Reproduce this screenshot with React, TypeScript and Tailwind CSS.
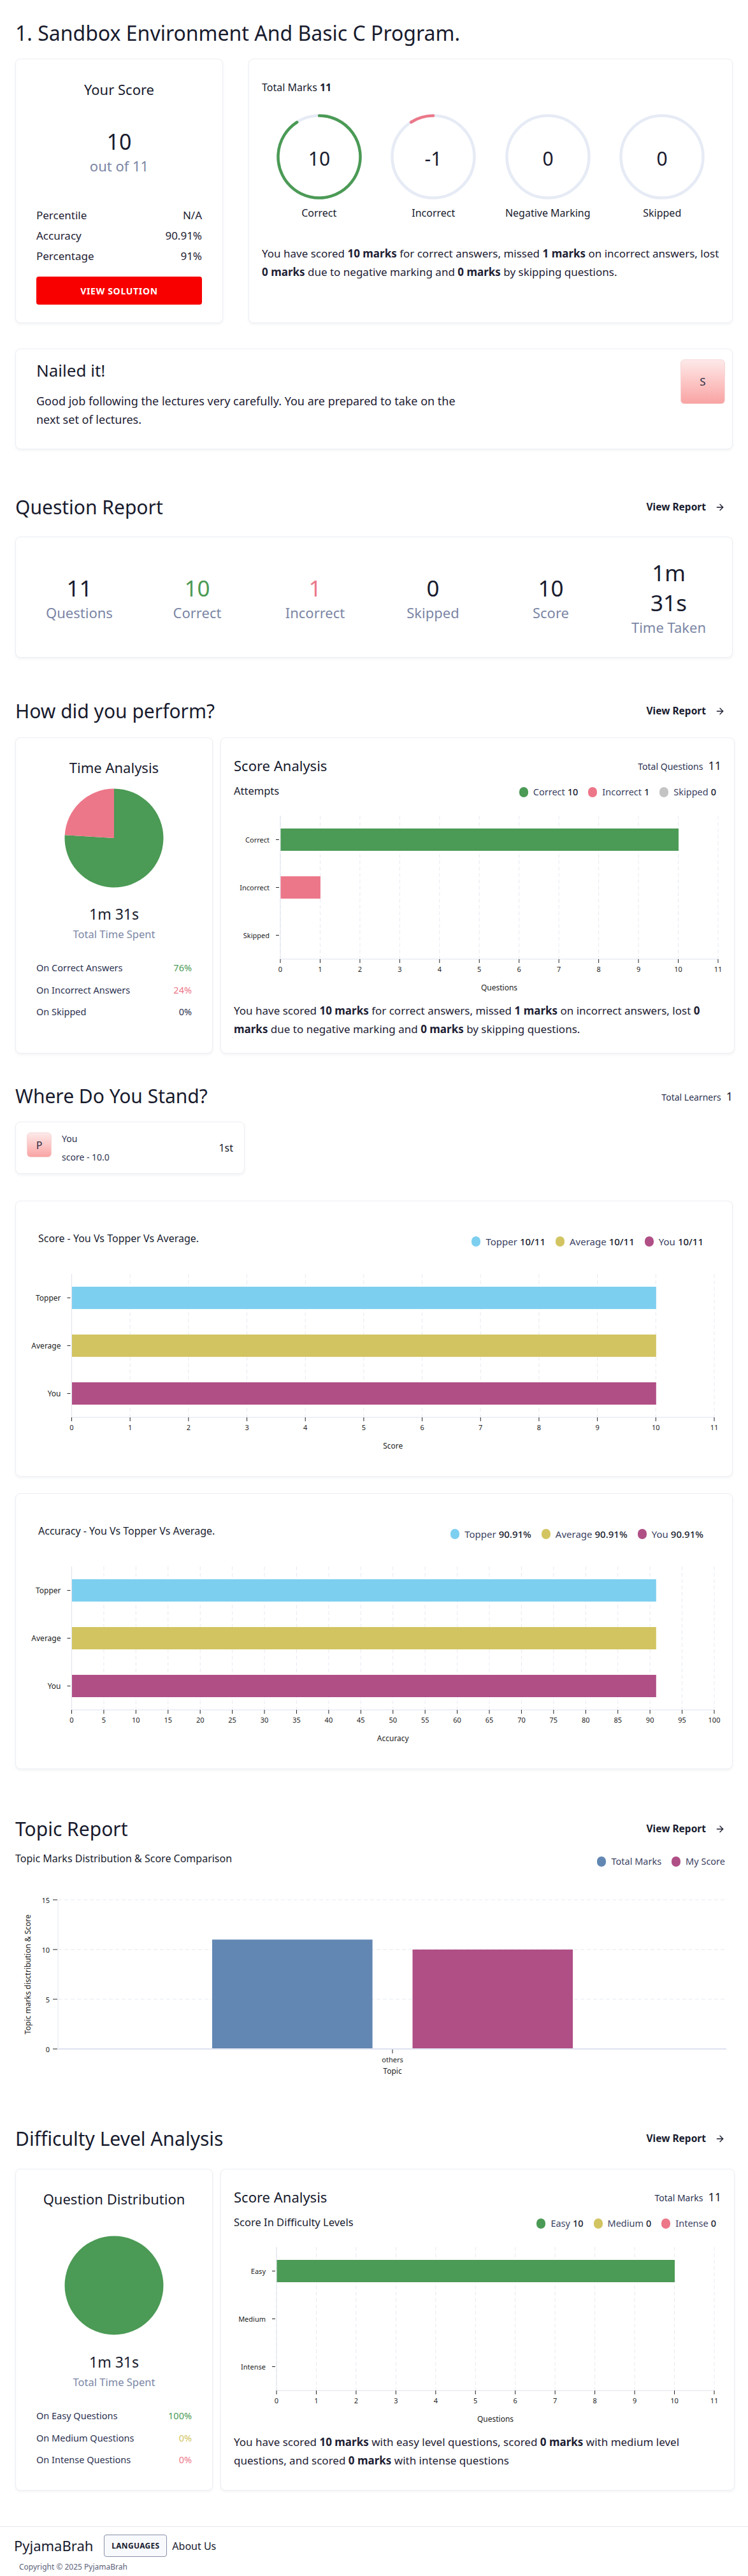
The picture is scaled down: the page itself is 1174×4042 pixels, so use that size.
import { ArrowRight } from 'lucide-react';

const GREEN = '#4b9a55';
const PINK = '#ec7789';
const BLUE = '#7dcff0';
const OLIVE = '#d2c461';
const MAGENTA = '#b04f86';
const STEEL = '#6287b3';

const polar = (cx: number, cy: number, r: number, deg: number) => {
    const a = (deg * Math.PI) / 180;
    return [cx + r * Math.sin(a), cy - r * Math.cos(a)];
};

const arcPath = (cx: number, cy: number, r: number, from: number, to: number) => {
    const [x1, y1] = polar(cx, cy, r, from);
    const [x2, y2] = polar(cx, cy, r, to - 0.01);
    const large = to - from > 180 ? 1 : 0;
    return `M ${x1} ${y1} A ${r} ${r} 0 ${large} 1 ${x2} ${y2}`;
};

const wedge = (cx: number, cy: number, r: number, from: number, to: number) => {
    const [x1, y1] = polar(cx, cy, r, from);
    const [x2, y2] = polar(cx, cy, r, to);
    const large = to - from > 180 ? 1 : 0;
    return `M ${cx} ${cy} L ${x1} ${y1} A ${r} ${r} 0 ${large} 1 ${x2} ${y2} Z`;
};

const ViewReport = () => (
    <a className="flex items-center gap-[14px] pr-3 text-[15.5px] font-bold text-[#181b2e] cursor-pointer">
        View Report
        <ArrowRight className="h-4 w-4" strokeWidth={2} />
    </a>
);

const SectionHeader = ({ title, right }: { title: string; right?: React.ReactNode }) => (
    <div className="flex h-10 items-center justify-between">
        <h2 className="text-[30px] leading-10 text-[#181b2e]">{title}</h2>
        {right ?? <ViewReport />}
    </div>
);

const Card = ({ className = '', children }: { className?: string; children: React.ReactNode }) => (
    <div className={`rounded-lg border border-[#eceef4] bg-white shadow-[0_2px_4px_rgba(40,50,90,0.06)] ${className}`}>{children}</div>
);

type LegendItem = { dot: string; label: string; value?: string };

const Legend = ({ items, size = 'text-[14.5px]' }: { items: LegendItem[]; size?: string }) => (
    <div className="flex items-center gap-4">
        {items.map((it) => (
            <div key={it.label} className={`flex items-center gap-2 ${size} text-[#3b4262]`}>
                <span className={`h-4 w-[14px] rounded-full ${it.dot}`} />
                <span>
                    {it.label}
                    {it.value && <span className="ml-1 font-medium text-[#181b2e]">{it.value}</span>}
                </span>
            </div>
        ))}
    </div>
);

const Ring = ({ value, label, arc }: { value: string; label: string; arc?: { from: number; to: number; color: string } }) => (
    <div className="flex flex-col items-center">
        <svg width={134} height={134} viewBox="0 0 134 134">
            <circle cx={67} cy={67} r={64.5} fill="none" stroke="#e6ebf5" strokeWidth={4.5} />
            {arc && <path d={arcPath(67, 67, 64.5, arc.from, arc.to)} fill="none" stroke={arc.color} strokeWidth={4.5} strokeLinecap="round" />}
            <text x={67} y={69} textAnchor="middle" dominantBaseline="central" fontSize={30} fill="#181b2e">{value}</text>
        </svg>
        <span className="mt-[9px] text-[16px] leading-6 text-[#181b2e]">{label}</span>
    </div>
);

type Row = { label: string; value: number; color: string };

const HBarChart = ({ width, left, plotW, max, ticks, rows, axisLabel, labelSize = 11 }: {
    width: number; left: number; plotW: number; max: number; ticks: number[]; rows: Row[]; axisLabel: string; labelSize?: number;
}) => {
    const top = 19;
    const plotH = 225;
    const bottom = top + plotH;
    const band = plotH / rows.length;
    const sx = (v: number) => left + (v / max) * plotW;
    return (
        <svg width={width} height={300} className="block">
            {ticks.map((t) => (
                <line key={`g${t}`} x1={sx(t)} x2={sx(t)} y1={top} y2={bottom} stroke="#e8eaf1" strokeDasharray="6 4" />
            ))}
            <line x1={left} x2={left} y1={top} y2={bottom} stroke="#dfe2ec" />
            <line x1={left} x2={left + plotW} y1={bottom} y2={bottom} stroke="#eef0f6" strokeWidth={2} />
            {rows.map((r, i) => {
                const cy = top + band * i + band / 2;
                return (
                    <g key={r.label}>
                        {r.value > 0 && <rect x={left + 0.5} y={cy - 17.5} width={(r.value / max) * plotW} height={35} fill={r.color} />}
                        <line x1={left - 7} x2={left - 2} y1={cy} y2={cy} stroke="#222" />
                        <text x={left - 17} y={cy} textAnchor="end" dominantBaseline="central" fontSize={labelSize} fill="#222">{r.label}</text>
                    </g>
                );
            })}
            {ticks.map((t) => (
                <g key={`t${t}`}>
                    <line x1={sx(t)} x2={sx(t)} y1={bottom} y2={bottom + 6} stroke="#222" />
                    <text x={sx(t)} y={bottom + 15} textAnchor="middle" dominantBaseline="central" fontSize={11} fill="#222">{t}</text>
                </g>
            ))}
            <text x={left + plotW / 2} y={bottom + 44} textAnchor="middle" dominantBaseline="central" fontSize={12} fill="#222">{axisLabel}</text>
        </svg>
    );
};

const range = (n: number, step = 1) => Array.from({ length: n }, (_, i) => i * step);

const Pie = ({ parts, mt }: { parts: { from: number; to: number; color: string }[]; mt: string }) => (
    <svg width={156} height={156} viewBox="0 0 156 156" className={`mx-auto block ${mt}`}>
        {parts.map((p) =>
            p.to - p.from >= 360 ? (
                <circle key={p.color} cx={78} cy={78} r={77.5} fill={p.color} />
            ) : (
                <path key={p.color} d={wedge(78, 78, 77.5, p.from, p.to)} fill={p.color} />
            )
        )}
    </svg>
);

const StatRows = ({ rows }: { rows: { label: string; value: string; color: string }[] }) => (
    <div className="flex flex-col gap-[12.5px]">
        {rows.map((r) => (
            <div key={r.label} className="flex justify-between text-[14.5px] leading-[22px]">
                <span className="text-[#2b3150]">{r.label}</span>
                <span className={r.color}>{r.value}</span>
            </div>
        ))}
    </div>
);

const ScoreAnalysisCard = ({ totalLabel, subtitle, legend, chart, children }: {
    totalLabel: string; subtitle: string; legend: LegendItem[]; chart: React.ReactNode; children: React.ReactNode;
}) => (
    <Card className="flex-1 px-5 pt-[28px] pb-[23px]">
        <div className="flex h-[30px] items-center justify-between">
            <h3 className="text-[22px] leading-[30px] text-[#181b2e]">Score Analysis</h3>
            <div className="flex items-baseline gap-2 text-[14px] text-[#2b3150]">
                {totalLabel}
                <span className="text-[18px] text-[#181b2e]">11</span>
            </div>
        </div>
        <div className="mt-[13px] flex h-6 items-center justify-between">
            <span className="text-[16.5px] text-[#181b2e]">{subtitle}</span>
            <div className="mt-1 pr-2">
                <Legend items={legend} />
            </div>
        </div>
        <div className="mt-2">{chart}</div>
        <p className="mt-[10px] text-[17px] leading-[29px] text-[#1d2033]">{children}</p>
    </Card>
);

const Badge = ({ letter, size }: { letter: string; size: string }) => (
    <div className={`flex items-center justify-center rounded-md border border-[#f6d6d6] bg-gradient-to-b from-[#fde9e9] to-[#f8a3a3] text-[#2b2f45] ${size}`}>
        {letter}
    </div>
);

const App = () => {
    const scoreTicks = range(12);
    const accTicks = range(21, 5);

    return (
        <div className="w-[1174px] bg-white font-['Noto_Sans',sans-serif] text-[#1d2033]">
            <div className="px-6">
                {/* Title */}
                <h1 className="pt-[30px] text-[32px] leading-[44px] text-[#181b2e]">1. Sandbox Environment And Basic C Program.</h1>

                {/* Score overview */}
                <div className="mt-[18px] flex gap-10">
                    <Card className="w-[326px] shrink-0 px-8 pt-[33px] pb-[28px]">
                        <div className="text-center text-[22px] leading-7 text-[#181b2e]">Your Score</div>
                        <div className="mt-11 text-center text-[34px] leading-[48px] text-[#181b2e]">10</div>
                        <div className="-mt-[2px] text-center text-[22px] leading-8 text-[#7b86a5]">out of 11</div>
                        <div className="mt-[50px] flex flex-col gap-2 text-[17px] leading-6">
                            <div className="flex justify-between"><span>Percentile</span><span>N/A</span></div>
                            <div className="flex justify-between"><span>Accuracy</span><span>90.91%</span></div>
                            <div className="flex justify-between"><span>Percentage</span><span>91%</span></div>
                        </div>
                        <button className="mt-5 h-11 w-full rounded bg-[#f80000] text-[14px] font-bold tracking-wider text-white">VIEW SOLUTION</button>
                    </Card>

                    <Card className="flex-1 px-5 pt-[33px]">
                        <div className="text-[16px] leading-[22px] text-[#181b2e]">
                            Total Marks <span className="font-bold">11</span>
                        </div>
                        <div className="mt-[31px] grid grid-cols-4">
                            <Ring value="10" label="Correct" arc={{ from: 0, to: (10 / 11) * 360, color: GREEN }} />
                            <Ring value="-1" label="Incorrect" arc={{ from: (10 / 11) * 360, to: 360, color: PINK }} />
                            <Ring value="0" label="Negative Marking" />
                            <Ring value="0" label="Skipped" />
                        </div>
                        <p className="mt-[37px] text-[17px] leading-[29px]">
                            You have scored <b>10 marks</b> for correct answers, missed <b>1 marks</b> on incorrect answers, lost <b>0 marks</b> due to negative marking and <b>0 marks</b> by skipping questions.
                        </p>
                    </Card>
                </div>

                {/* Feedback */}
                <Card className="mt-10 flex justify-between">
                    <div className="pt-[17px] pl-8 pb-[32px]">
                        <div className="text-[26px] leading-8 text-[#181b2e]">Nailed it!</div>
                        <p className="mt-[18px] max-w-[680px] text-[18px] leading-[28.5px]">
                            Good job following the lectures very carefully. You are prepared to take on the next set of lectures.
                        </p>
                    </div>
                    <div className="pt-4 pr-[11px]">
                        <Badge letter="S" size="h-[70px] w-[70px] text-[17px]" />
                    </div>
                </Card>

                {/* Question Report */}
                <div className="mt-[71px]">
                    <SectionHeader title="Question Report" />
                </div>
                <Card className="mt-[26px] grid grid-cols-6 items-center px-[7px] py-[32px]">
                    {[
                        { v: '11', l: 'Questions', c: 'text-[#181b2e]' },
                        { v: '10', l: 'Correct', c: 'text-[#4b9a55]' },
                        { v: '1', l: 'Incorrect', c: 'text-[#ec7789]' },
                        { v: '0', l: 'Skipped', c: 'text-[#181b2e]' },
                        { v: '10', l: 'Score', c: 'text-[#181b2e]' },
                        { v: '1m 31s', l: 'Time Taken', c: 'text-[#181b2e]' },
                    ].map((s) => (
                        <div key={s.l} className="flex flex-col items-center text-center">
                            <span className={`max-w-[90px] text-[35px] leading-[47px] ${s.c}`}>{s.v}</span>
                            <span className="text-[22px] leading-[30px] text-[#7b86a5]">{s.l}</span>
                        </div>
                    ))}
                </Card>

                {/* How did you perform */}
                <div className="mt-16">
                    <SectionHeader title="How did you perform?" />
                </div>
                <div className="mt-[21px] flex gap-3">
                    <Card className="w-[310px] shrink-0 px-8 pt-[31px]">
                        <div className="text-center text-[22px] leading-[30px] text-[#181b2e]">Time Analysis</div>
                        <Pie mt="mt-[18px]" parts={[{ from: 0, to: 273.6, color: GREEN }, { from: 273.6, to: 360, color: PINK }]} />
                        <div className="mt-[23px] text-center text-[23px] leading-9 text-[#181b2e]">1m 31s</div>
                        <div className="text-center text-[16.5px] leading-7 text-[#7b86a5]">Total Time Spent</div>
                        <div className="mt-[27px]">
                            <StatRows rows={[
                                { label: 'On Correct Answers', value: '76%', color: 'text-[#4b9a55]' },
                                { label: 'On Incorrect Answers', value: '24%', color: 'text-[#ec7789]' },
                                { label: 'On Skipped', value: '0%', color: 'text-[#2b3150]' },
                            ]} />
                        </div>
                    </Card>
                    <ScoreAnalysisCard
                        totalLabel="Total Questions"
                        subtitle="Attempts"
                        legend={[
                            { dot: 'bg-[#4b9a55]', label: 'Correct', value: '10' },
                            { dot: 'bg-[#ec7789]', label: 'Incorrect', value: '1' },
                            { dot: 'bg-[#c4c4c4]', label: 'Skipped', value: '0' },
                        ]}
                        chart={
                            <HBarChart
                                width={765}
                                left={73}
                                plotW={687}
                                max={11}
                                ticks={scoreTicks}
                                axisLabel="Questions"
                                rows={[
                                    { label: 'Correct', value: 10, color: GREEN },
                                    { label: 'Incorrect', value: 1, color: PINK },
                                    { label: 'Skipped', value: 0, color: '#c4c4c4' },
                                ]}
                            />
                        }
                    >
                        You have scored <b>10 marks</b> for correct answers, missed <b>1 marks</b> on incorrect answers, lost <b>0 marks</b> due to negative marking and <b>0 marks</b> by skipping questions.
                    </ScoreAnalysisCard>
                </div>

                {/* Where do you stand */}
                <div className="mt-[47px]">
                    <SectionHeader
                        title="Where Do You Stand?"
                        right={
                            <div className="flex items-baseline gap-2 text-[14px] text-[#2b3150]">
                                Total Learners <span className="text-[18px] text-[#181b2e]">1</span>
                            </div>
                        }
                    />
                </div>
                <Card className="mt-5 flex h-[82px] w-[360px] items-center justify-between px-[17px]">
                    <div className="flex items-center gap-4">
                        <div className="mb-[9px]">
                            <Badge letter="P" size="h-[39px] w-[39px] text-[16px]" />
                        </div>
                        <div className="flex flex-col gap-[5px] text-[14px] leading-6 text-[#2b3150]">
                            <span>You</span>
                            <span>score - 10.0</span>
                        </div>
                    </div>
                    <span className="text-[16px] text-[#181b2e]">1st</span>
                </Card>

                <Card className="mt-[42px] pt-[46px] pb-[36px]">
                    <div className="flex h-6 items-start justify-between pl-[35px] pr-[45px]">
                        <span className="text-[16px] leading-6 text-[#181b2e]">Score - You Vs Topper Vs Average.</span>
                        <div className="mt-[6px]">
                            <Legend size="text-[15px]" items={[
                                { dot: 'bg-[#7dcff0]', label: 'Topper', value: '10/11' },
                                { dot: 'bg-[#d2c461]', label: 'Average', value: '10/11' },
                                { dot: 'bg-[#b04f86]', label: 'You', value: '10/11' },
                            ]} />
                        </div>
                    </div>
                    <div className="mt-[25px]">
                        <HBarChart
                            width={1124}
                            left={87.5}
                            plotW={1008.5}
                            max={11}
                            ticks={scoreTicks}
                            axisLabel="Score"
                            labelSize={12}
                            rows={[
                                { label: 'Topper', value: 10, color: BLUE },
                                { label: 'Average', value: 10, color: OLIVE },
                                { label: 'You', value: 10, color: MAGENTA },
                            ]}
                        />
                    </div>
                </Card>

                <Card className="mt-[26px] pt-[46px] pb-[36px]">
                    <div className="flex h-6 items-start justify-between pl-[35px] pr-[45px]">
                        <span className="text-[16px] leading-6 text-[#181b2e]">Accuracy - You Vs Topper Vs Average.</span>
                        <div className="mt-[6px]">
                            <Legend size="text-[15px]" items={[
                                { dot: 'bg-[#7dcff0]', label: 'Topper', value: '90.91%' },
                                { dot: 'bg-[#d2c461]', label: 'Average', value: '90.91%' },
                                { dot: 'bg-[#b04f86]', label: 'You', value: '90.91%' },
                            ]} />
                        </div>
                    </div>
                    <div className="mt-[25px]">
                        <HBarChart
                            width={1124}
                            left={87.5}
                            plotW={1008.5}
                            max={100}
                            ticks={accTicks}
                            axisLabel="Accuracy"
                            labelSize={12}
                            rows={[
                                { label: 'Topper', value: 90.91, color: BLUE },
                                { label: 'Average', value: 90.91, color: OLIVE },
                                { label: 'You', value: 90.91, color: MAGENTA },
                            ]}
                        />
                    </div>
                </Card>

                {/* Topic Report */}
                <div className="mt-[74px]">
                    <SectionHeader title="Topic Report" />
                </div>
                <div className="mt-[14px] flex h-6 items-start justify-between">
                    <span className="text-[16px] leading-6 text-[#181b2e]">Topic Marks Distribution &amp; Score Comparison</span>
                    <div className="mt-[6px] pr-3">
                        <Legend items={[
                            { dot: 'bg-[#6287b3]', label: 'Total Marks' },
                            { dot: 'bg-[#b04f86]', label: 'My Score' },
                        ]} />
                    </div>
                </div>
                <svg width={1126} height={336} className="block">
                    {[5, 10, 15].map((v) => (
                        <line key={v} x1={67} x2={1116} y1={287 - v * 15.6} y2={287 - v * 15.6} stroke="#e8eaf1" strokeDasharray="6 4" />
                    ))}
                    <line x1={67} x2={67} y1={53} y2={287} stroke="#e6e8f0" />
                    <rect x={309} y={287 - 11 * 15.6} width={251.6} height={11 * 15.6} fill={STEEL} />
                    <rect x={623.5} y={287 - 10 * 15.6} width={251.6} height={10 * 15.6} fill={MAGENTA} />
                    <line x1={67} x2={1116} y1={287} y2={287} stroke="#dfe3f0" strokeWidth={2} />
                    {[0, 5, 10, 15].map((v) => (
                        <g key={`y${v}`}>
                            <line x1={59} x2={66} y1={287 - v * 15.6} y2={287 - v * 15.6} stroke="#222" />
                            <text x={54} y={287 - v * 15.6} textAnchor="end" dominantBaseline="central" fontSize={11} fill="#222">{v}</text>
                        </g>
                    ))}
                    <line x1={592} x2={592} y1={288} y2={294} stroke="#222" />
                    <text x={592} y={303} textAnchor="middle" dominantBaseline="central" fontSize={11} fill="#222">others</text>
                    <text x={592} y={321} textAnchor="middle" dominantBaseline="central" fontSize={12} fill="#222">Topic</text>
                    <text x={19} y={170} transform="rotate(-90 19 170)" textAnchor="middle" dominantBaseline="central" fontSize={12} fill="#222">Topic marks disctribution &amp; Score</text>
                </svg>

                {/* Difficulty */}
                <div className="mt-[72px]">
                    <SectionHeader title="Difficulty Level Analysis" />
                </div>
                <div className="mt-[27px] flex gap-3">
                    <Card className="w-[310px] shrink-0 px-8 pt-[31px] pb-[37px]">
                        <div className="text-center text-[22px] leading-[30px] text-[#181b2e]">Question Distribution</div>
                        <Pie mt="mt-[43px]" parts={[{ from: 0, to: 360, color: GREEN }]} />
                        <div className="mt-6 text-center text-[23px] leading-9 text-[#181b2e]">1m 31s</div>
                        <div className="text-center text-[16.5px] leading-7 text-[#7b86a5]">Total Time Spent</div>
                        <div className="mt-[27px]">
                            <StatRows rows={[
                                { label: 'On Easy Questions', value: '100%', color: 'text-[#4b9a55]' },
                                { label: 'On Medium Questions', value: '0%', color: 'text-[#d2c461]' },
                                { label: 'On Intense Questions', value: '0%', color: 'text-[#ec7789]' },
                            ]} />
                        </div>
                    </Card>
                    <ScoreAnalysisCard
                        totalLabel="Total Marks"
                        subtitle="Score In Difficulty Levels"
                        legend={[
                            { dot: 'bg-[#4b9a55]', label: 'Easy', value: '10' },
                            { dot: 'bg-[#d2c461]', label: 'Medium', value: '0' },
                            { dot: 'bg-[#ec7789]', label: 'Intense', value: '0' },
                        ]}
                        chart={
                            <HBarChart
                                width={765}
                                left={67}
                                plotW={687}
                                max={11}
                                ticks={scoreTicks}
                                axisLabel="Questions"
                                rows={[
                                    { label: 'Easy', value: 10, color: GREEN },
                                    { label: 'Medium', value: 0, color: OLIVE },
                                    { label: 'Intense', value: 0, color: PINK },
                                ]}
                            />
                        }
                    >
                        You have scored <b>10 marks</b> with easy level questions, scored <b>0 marks</b> with medium level questions, and scored <b>0 marks</b> with intense questions
                    </ScoreAnalysisCard>
                </div>
            </div>

            {/* Footer */}
            <footer className="mt-14 border-t border-[#e2e5ee] px-[22px] pt-[12px] pb-[6px]">
                <div className="flex h-[35px] items-center">
                    <span className="text-[22px] text-[#181b2e]">PyjamaBrah</span>
                    <button className="ml-[17px] h-[35px] w-[99px] rounded border border-[#8a90a8] bg-[#f8f9fc] text-[12px] font-bold tracking-wide text-[#181b2e]">LANGUAGES</button>
                    <span className="ml-2 text-[16px] text-[#181b2e]">About Us</span>
                </div>
                <div className="mt-2 pl-2 text-[12px] leading-4 text-[#5b6178]">Copyright © 2025 PyjamaBrah</div>
            </footer>
        </div>
    );
};

export default App;
